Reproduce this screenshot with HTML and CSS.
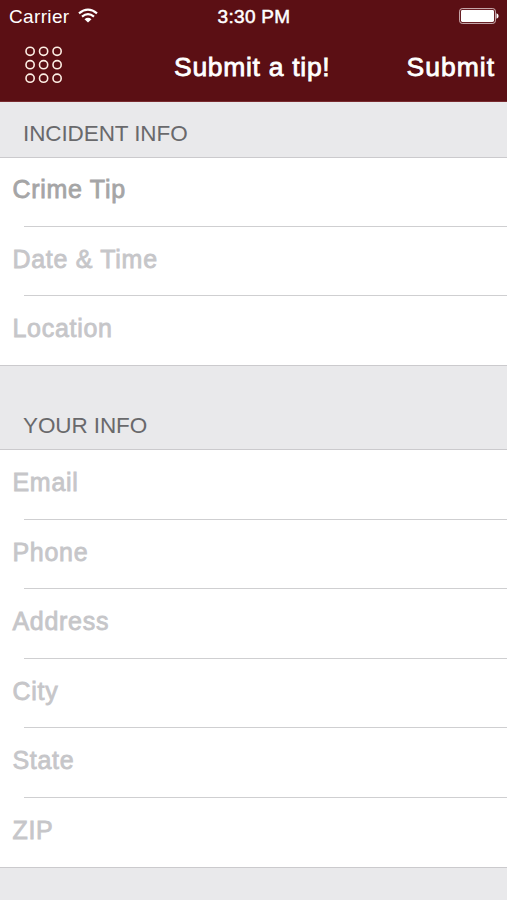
FILE: index.html
```html
<!DOCTYPE html>
<html lang="en">
<head>
<meta charset="utf-8">
<title>Submit a tip!</title>
<link rel="stylesheet" href="styles.css">
</head>
<body>
<header class="header">
  <div class="status">
    <div class="carrier"><span>Carrier</span>
      <svg class="wifi" width="20" height="15" viewBox="0 0 20 15" fill="none" stroke="#fff" stroke-width="2.2"><path d="M1 5.3Q10-2.2 19 5.3M4 8.7Q10 3.7 16 8.7"/><path d="M6.5 11.2Q10 8.4 13.5 11.2L10 14.6Z" fill="#fff" stroke="none"/></svg>
    </div>
    <span class="time">3:30 PM</span>
    <svg class="battery" width="40" height="16" viewBox="0 0 40 16"><rect x=".6" y=".6" width="35.8" height="14.8" rx="2.6" fill="none" stroke="#d1b6b9" stroke-width="1"/><rect x="2" y="2" width="33" height="12" rx="1.4" fill="#fff"/><path d="M37.5 5.2Q39.6 6 39.6 8T37.5 10.8Z" fill="#fff"/></svg>
  </div>
  <nav class="nav">
    <svg class="grid" width="38" height="38" viewBox="0 0 38 38" fill="none" stroke="#fdeee4" stroke-width="1.6"><circle cx="5.1" cy="5.3" r="4.1"/><circle cx="18.6" cy="5.3" r="4.1"/><circle cx="32.1" cy="5.3" r="4.1"/><circle cx="5.1" cy="18.7" r="4.1"/><circle cx="18.6" cy="18.7" r="4.1"/><circle cx="32.1" cy="18.7" r="4.1"/><circle cx="5.1" cy="32.2" r="4.1"/><circle cx="18.6" cy="32.2" r="4.1"/><circle cx="32.1" cy="32.2" r="4.1"/></svg>
    <h1 class="title">Submit a tip!</h1>
    <span class="submit">Submit</span>
  </nav>
</header>
<main>
  <h2 class="section">INCIDENT INFO</h2>
  <ul class="list incident">
    <li class="row chosen">Crime Tip</li>
    <li class="row">Date &amp; Time</li>
    <li class="row">Location</li>
  </ul>
  <h2 class="section your">YOUR INFO</h2>
  <ul class="list contact">
    <li class="row">Email</li>
    <li class="row">Phone</li>
    <li class="row">Address</li>
    <li class="row">City</li>
    <li class="row">State</li>
    <li class="row">ZIP</li>
  </ul>
</main>
</body>
</html>
```
FILE: styles.css
```css
* { box-sizing: border-box; margin: 0; padding: 0; }
body {
  height: 900px;
  overflow: hidden;
  background: #e9e9eb;
  font-family: "Liberation Sans", Arial, sans-serif;
}
.header {
  height: 102px;
  background: #5b0f14;
  border-bottom: 1px solid #792b30;
  color: #fff;
}
.status {
  display: grid;
  grid-template-columns: 1fr auto 1fr;
  align-items: center;
  height: 32px;
  padding: 0 8px 0 9px;
  font-size: 19px;
}
.carrier { display: flex; align-items: center; gap: 8px; letter-spacing: .35px; }
.carrier span, .time { padding-top: 1px; }
.wifi { margin-top: -1px; }
.time { letter-spacing: .3px; -webkit-text-stroke: .5px #fff; }
.battery { justify-self: end; }
.nav {
  display: grid;
  grid-template-columns: 149px 1fr auto;
  align-items: center;
  height: 69px;
  padding: 0 12px 0 25px;
  font-size: 27px;
}
.grid { margin-top: -3px; }
.title, .submit { padding-top: 2px; font-size: 26.5px; font-weight: 400; -webkit-text-stroke: .8px #fff; }
.title { letter-spacing: .7px; }
.submit { letter-spacing: 1px; }
.section {
  height: 55px;
  padding: 18px 0 0 23px;
  color: #69696c;
  font-size: 22.5px;
  line-height: 27px;
  font-weight: 400;
  letter-spacing: -.1px;
}
.your { height: 83px; padding-top: 46px; }
.list {
  display: grid;
  list-style: none;
  background: #fff;
  border-top: 1px solid #cbcacd;
  border-bottom: 1px solid #cbcacd;
}
.incident { height: 209px; grid-template-rows: repeat(3, 1fr); }
.contact { height: 419px; grid-template-rows: repeat(6, 1fr); }
.row {
  padding-left: 12.5px;
  color: #c6c6c9;
  font-size: 25px;
  line-height: 64px;
  letter-spacing: .7px;
  -webkit-text-stroke: .8px currentColor;
  background: linear-gradient(#cfcfd1, #cfcfd1) 24px 100% / 100% 1px no-repeat;
}
.row:last-child { background: none; }
.chosen { color: #a5a5a6; line-height: 63px; }
```
